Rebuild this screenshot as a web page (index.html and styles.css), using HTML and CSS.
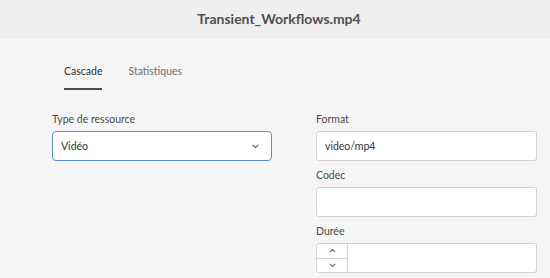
FILE: index.html
```html
<!DOCTYPE html>
<html lang="fr">
<head>
<meta charset="utf-8">
<title>Transient_Workflows.mp4</title>
<link rel="stylesheet" href="styles.css">
</head>
<body>
<header class="header">
  <h1 class="title">Transient_Workflows.mp4</h1>
</header>
<nav class="tabs">
  <div class="tab tab-active">Cascade</div>
  <div class="tab">Statistiques</div>
</nav>
<main class="form">
  <div class="col">
    <div class="field">
      <label class="label">Type de ressource</label>
      <div class="select">
        <span class="select-value">Vidéo</span>
        <svg class="chevron" width="7" height="5" viewBox="0 0 7 5"><path d="M1 1.2 L3.5 3.6 L6 1.2" fill="none" stroke="#6e6e6e" stroke-width="1.2" stroke-linecap="round" stroke-linejoin="round"/></svg>
      </div>
    </div>
  </div>
  <div class="col">
    <div class="field">
      <label class="label">Format</label>
      <div class="input">video/mp4</div>
    </div>
    <div class="field">
      <label class="label">Codec</label>
      <div class="input"></div>
    </div>
    <div class="field">
      <label class="label">Durée</label>
      <div class="number">
        <div class="steps">
          <div class="step">
            <svg width="7" height="5" viewBox="0 0 7 5"><path d="M1 3.8 L3.5 1.4 L6 3.8" fill="none" stroke="#6e6e6e" stroke-width="1.1" stroke-linecap="round" stroke-linejoin="round"/></svg>
          </div>
          <div class="step step-down">
            <svg width="7" height="5" viewBox="0 0 7 5"><path d="M1 1.2 L3.5 3.6 L6 1.2" fill="none" stroke="#6e6e6e" stroke-width="1.1" stroke-linecap="round" stroke-linejoin="round"/></svg>
          </div>
        </div>
        <div class="number-field"></div>
      </div>
    </div>
  </div>
</main>
</body>
</html>
```
FILE: styles.css
```css
* { box-sizing: border-box; }
html, body {
  margin: 0;
  padding: 0;
  height: 100%;
}
body {
  background: #f5f5f5;
  font-family: Lato, "Open Sans", sans-serif;
  color: #4b4b4b;
  overflow: hidden;
}
.header {
  height: 38px;
  background: #efefef;
  border-bottom: 1px solid #e8e8e8;
  display: flex;
  align-items: center;
  justify-content: center;
  padding-left: 8px;
}
.title {
  margin: 0;
  font-size: 14px;
  font-weight: 700;
  color: #505050;
}
.tabs {
  display: flex;
  gap: 26px;
  padding-left: 64px;
  padding-top: 26px;
}
.tab {
  font-size: 10.5px;
  line-height: 14px;
  color: #6e6e6e;
  padding-bottom: 10px;
  border-bottom: 2px solid transparent;
}
.tab-active {
  color: #323232;
  border-bottom-color: #4b4b4b;
}
.form {
  display: grid;
  grid-template-columns: 220px 221px;
  column-gap: 44px;
  padding-left: 52px;
  padding-top: 21px;
  align-items: start;
}
.col {
  display: flex;
  flex-direction: column;
  gap: 6px;
}
.field {
  display: flex;
  flex-direction: column;
  gap: 4px;
}
.label {
  font-size: 10.5px;
  line-height: 16px;
  color: #4b4b4b;
}
.select, .input, .number {
  height: 30px;
  background: #ffffff;
  border: 1px solid #d3d3d3;
  border-radius: 3px;
  font-size: 10.5px;
  color: #323232;
}
.select {
  border-color: #5a8fd8;
  border-radius: 4px;
  display: flex;
  align-items: center;
  justify-content: space-between;
  padding: 0 12px 0 8px;
}
.input {
  display: flex;
  align-items: center;
  padding: 0 8px;
}
.number {
  display: flex;
}
.steps {
  width: 31px;
  display: flex;
  flex-direction: column;
  border-right: 1px solid #d3d3d3;
}
.step {
  flex: 1;
  display: flex;
  align-items: center;
  justify-content: center;
}
.step-down {
  border-top: 1px solid #d3d3d3;
}
.number-field {
  flex: 1;
}
```
